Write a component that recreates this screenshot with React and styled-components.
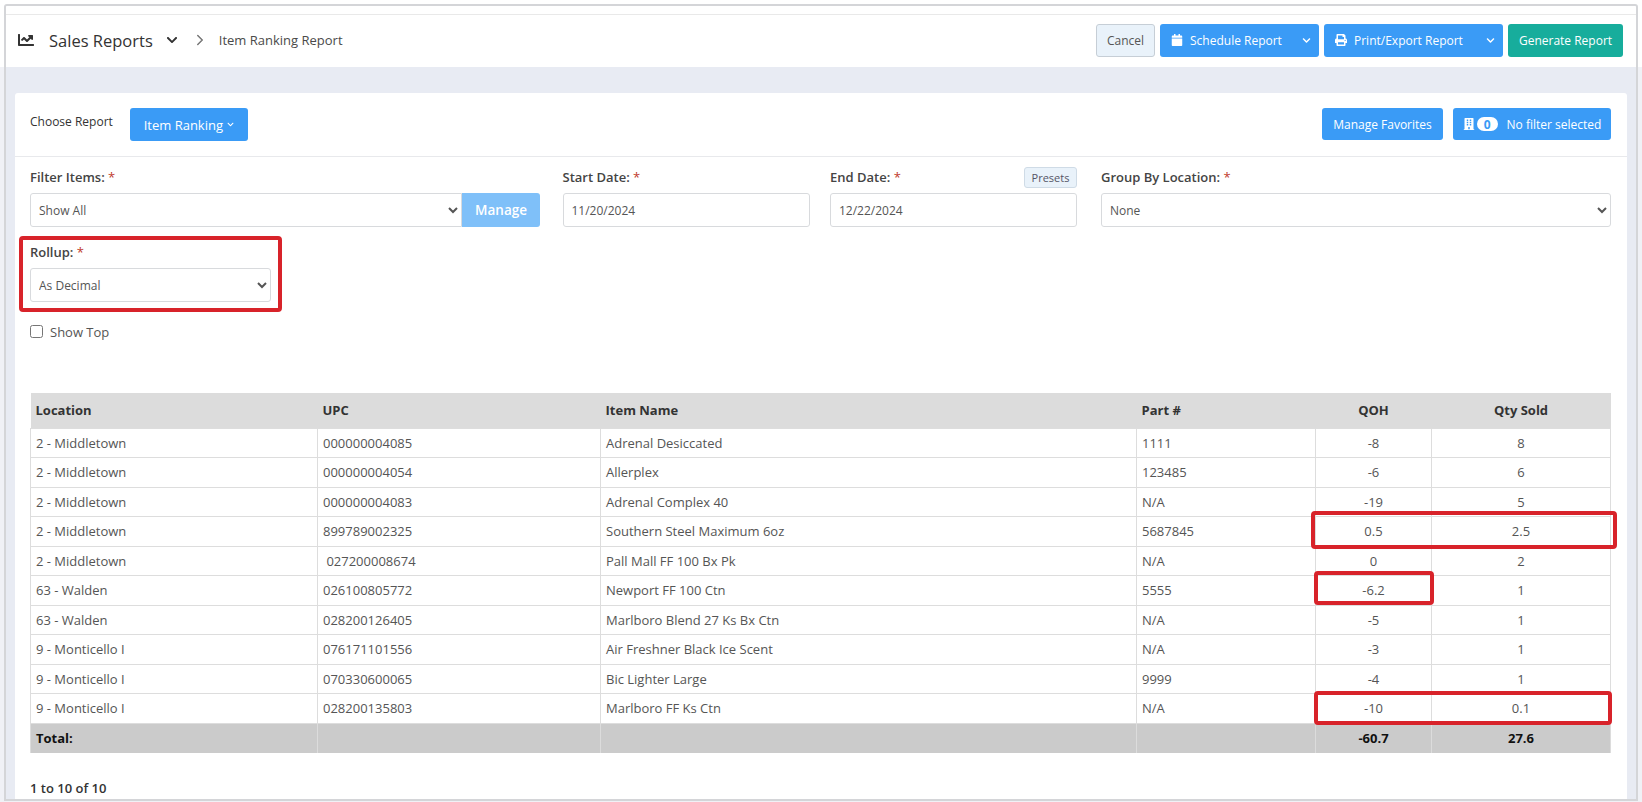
import React from "react";
import styled, { createGlobalStyle } from "styled-components";
import { FaChartLine, FaCalendar, FaPrint, FaBuilding, FaChevronDown } from "react-icons/fa";
import { ChevronRight } from "lucide-react";

const Global = createGlobalStyle`
  html, body { margin: 0; padding: 0; height: 802px; overflow: hidden; }
  body {
    font-family: "Open Sans", "Liberation Sans", sans-serif;
    font-size: 12px;
    color: #555;
    background: linear-gradient(#fff 67px, #f0f1f6 67px);
  }
  * { box-sizing: border-box; }
`;

const Frame = styled.div`
  margin: 4px 0 0 4px;
  width: 1634px;
  height: 797px;
  border: 2px solid #d4d5d8;
  border-radius: 3px 3px 0 0;
  display: flex;
  flex-direction: column;
  overflow: hidden;
  background: #e8ebf3;
`;
const TopStrip = styled.div`
  height: 9px;
  flex: none;
  background: #fff;
  border-bottom: 1px solid #e9e9e9;
`;
const TopBar = styled.header`
  height: 52px;
  flex: none;
  background: #fff;
  display: flex;
  align-items: center;
  justify-content: space-between;
  padding: 0 13px 2px 12px;
`;
const Crumbs = styled.div`
  display: flex;
  align-items: center;
  color: #333;
`;
const Title = styled.span`
  font-size: 16.5px;
  margin-left: 15px;
  color: #333;
`;
const Current = styled.span`
  font-size: 13px;
  color: #4a4a4a;
  margin-left: 10px;
`;
const Actions = styled.div`
  display: flex;
  gap: 5px;
`;
const Button = styled.button`
  height: ${p => p.$h || 32}px;
  border-radius: 3px;
  border: 1px solid ${p => p.$border || "transparent"};
  background: ${p => p.$bg || "#3a9bf6"};
  color: ${p => p.$color || "#fff"};
  font: ${p => p.$size || 12}px "Open Sans", sans-serif;
  display: flex;
  align-items: center;
  justify-content: ${p => p.$between ? "space-between" : "center"};
  width: ${p => p.$w}px;
  padding: 0 ${p => p.$between ? "7px" : "0"} 0 ${p => p.$between ? "10px" : "0"};
  white-space: nowrap;
  flex: none;
`;
const IconText = styled.span`
  display: flex;
  align-items: center;
  gap: 7px;
`;
const Main = styled.main`
  flex: 1;
  padding: 26px 9px 0 9px;
`;
const Card = styled.section`
  background: #fff;
  height: 706px;
  border-radius: 3px 3px 0 0;
`;
const CardHeader = styled.div`
  height: 64px;
  padding: 15px 16px 0 15px;
  display: flex;
  justify-content: space-between;
  align-items: flex-start;
  border-bottom: 1px solid #e8e9ec;
`;
const HeaderGroup = styled.div`
  display: flex;
  align-items: flex-start;
  gap: ${p => p.$gap}px;
`;
const ChooseLabel = styled.span`
  font-size: 12px;
  color: #333;
  line-height: 16px;
  margin-top: 6px;
`;
const Count = styled.span`
  background: #fff;
  color: #3a9bf6;
  font-size: 12px;
  font-weight: 700;
  width: 21px;
  height: 14px;
  border-radius: 7px;
  display: inline-flex;
  align-items: center;
  justify-content: center;
  margin-left: -5px;
  margin-right: 2px;
`;
const Filters = styled.div`
  padding: 11px 15px 0 15px;
`;
const FieldGrid = styled.div`
  display: grid;
  grid-template-columns: 532.5px 267.5px 271px 510px;
`;
const Field = styled.div`
  width: ${p => p.$w}px;
`;
const LabelRow = styled.div`
  height: 25px;
  display: flex;
  align-items: flex-start;
  justify-content: space-between;
`;
const Label = styled.label`
  font-size: 13px;
  font-weight: 600;
  color: #444;
  line-height: 18px;
`;
const Star = styled.span`
  color: #c0392b;
  font-weight: 400;
`;
const Presets = styled.span`
  font-size: 11px;
  color: #556;
  background: #e9f2fa;
  border: 1px solid #cfdbe6;
  border-radius: 3px;
  height: 21px;
  width: 53px;
  display: flex;
  align-items: center;
  justify-content: center;
  margin-top: -1px;
`;
const Select = styled.select`
  height: 34px;
  width: 100%;
  border: 1px solid #d8dadd;
  border-radius: ${p => p.$joined ? "3px 0 0 3px" : "3px"};
  background: #fff;
  color: #555;
  font: 12px "Open Sans", sans-serif;
  padding: 0 4px;
  outline: none;
  min-width: 0;
`;
const Input = styled.input`
  height: 34px;
  width: 100%;
  border: 1px solid #d8dadd;
  border-radius: 3px;
  color: #555;
  font: 12px "Open Sans", sans-serif;
  padding: 0 8px;
`;
const Joined = styled.div`
  display: flex;
`;
const ManageButton = styled.button`
  width: 78px;
  height: 34px;
  flex: none;
  border: 0;
  border-radius: 0 3px 3px 0;
  background: #7fc0f9;
  color: #fff;
  font: 600 13.5px "Open Sans", sans-serif;
`;
const Highlight = styled.div`
  width: 263px;
  height: 76px;
  margin: 9px 0 0 -11px;
  padding: 3px 7px 0 7px;
  border: 4px solid #d8232a;
  border-radius: 4px;
`;
const CheckRow = styled.label`
  display: flex;
  align-items: center;
  gap: 7px;
  margin-top: 12px;
  height: 15px;
  font-size: 13px;
  color: #555;
`;
const Check = styled.input`
  width: 13px;
  height: 13px;
  margin: 0;
`;
const TableWrap = styled.div`
  position: relative;
  margin-top: 54px;
  width: 1580px;
`;
const Table = styled.table`
  width: 100%;
  table-layout: fixed;
  border-collapse: collapse;
  font-size: 13px;
`;
const Th = styled.th`
  height: 35px;
  background: #dcdcdc;
  color: #333;
  font-weight: 700;
  font-size: 13px;
  padding: 0 5px;
  text-align: ${p => p.$center ? "center" : "left"};
`;
const Td = styled.td`
  height: 29.5px;
  border: 1px solid #dddddd;
  color: #555;
  padding: 0 5px;
  text-align: ${p => p.$center ? "center" : "left"};
`;
const TotalCell = styled.td`
  height: 30px;
  background: #cbcbcb;
  border: 1px solid #dcdcdc;
  border-bottom: 0;
  color: #111;
  font-weight: 700;
  padding: 0 5px;
  text-align: ${p => p.$center ? "center" : "left"};
`;
const Mark = styled.div`
  position: absolute;
  border: 4px solid #d8232a;
  border-radius: 4px;
`;
const Pager = styled.div`
  margin-top: 26px;
  font-size: 13px;
  font-weight: 600;
  color: #333;
`;

const rows = [
  ["2 - Middletown", "000000004085", "Adrenal Desiccated", "1111", "-8", "8"],
  ["2 - Middletown", "000000004054", "Allerplex", "123485", "-6", "6"],
  ["2 - Middletown", "000000004083", "Adrenal Complex 40", "N/A", "-19", "5"],
  ["2 - Middletown", "899789002325", "Southern Steel Maximum 6oz", "5687845", "0.5", "2.5"],
  ["2 - Middletown", "\u00a0027200008674", "Pall Mall FF 100 Bx Pk", "N/A", "0", "2"],
  ["63 - Walden", "026100805772", "Newport FF 100 Ctn", "5555", "-6.2", "1"],
  ["63 - Walden", "028200126405", "Marlboro Blend 27 Ks Bx Ctn", "N/A", "-5", "1"],
  ["9 - Monticello I", "076171101556", "Air Freshner Black Ice Scent", "N/A", "-3", "1"],
  ["9 - Monticello I", "070330600065", "Bic Lighter Large", "9999", "-4", "1"],
  ["9 - Monticello I", "028200135803", "Marlboro FF Ks Ctn", "N/A", "-10", "0.1"],
];
const widths = [287, 283, 536, 179, 116, 179];
const marks = [
  { left: 1281, top: 118, width: 306, height: 38 },
  { left: 1284, top: 178, width: 120, height: 34 },
  { left: 1284, top: 298, width: 298, height: 34 },
];

export default function App() {
  return (
    <>
      <Global />
      <Frame>
        <TopStrip />
        <TopBar>
          <Crumbs>
            <FaChartLine size={16} color="#333" />
            <Title>Sales Reports</Title>
            <FaChevronDown size={12} color="#333" style={{ marginLeft: 13 }} />
            <ChevronRight size={18} color="#777" style={{ marginLeft: 13 }} />
            <Current>Item Ranking Report</Current>
          </Crumbs>
          <Actions>
            <Button $w={59} $h={33} $bg="#e9f2fa" $border="#c6ced6" $color="#555">Cancel</Button>
            <Button $w={159} $h={33} $between>
              <IconText><FaCalendar size={12} />Schedule Report</IconText>
              <FaChevronDown size={9} />
            </Button>
            <Button $w={179} $h={33} $between>
              <IconText><FaPrint size={12} />Print/Export Report</IconText>
              <FaChevronDown size={9} />
            </Button>
            <Button $w={115} $h={33} $bg="#17ad9c">Generate Report</Button>
          </Actions>
        </TopBar>
        <Main>
          <Card>
            <CardHeader>
              <HeaderGroup $gap={17}>
                <ChooseLabel>Choose Report</ChooseLabel>
                <Button $w={118} $h={33} $size={13}>
                  <IconText>Item Ranking<FaChevronDown size={7} style={{ marginLeft: -3 }} /></IconText>
                </Button>
              </HeaderGroup>
              <HeaderGroup $gap={10}>
                <Button $w={121}>Manage Favorites</Button>
                <Button $w={158}>
                  <IconText><FaBuilding size={12} /><Count>0</Count>No filter selected</IconText>
                </Button>
              </HeaderGroup>
            </CardHeader>
            <Filters>
              <FieldGrid>
                <Field $w={510}>
                  <LabelRow><Label>Filter Items: <Star>*</Star></Label></LabelRow>
                  <Joined>
                    <Select $joined defaultValue="all"><option value="all">Show All</option></Select>
                    <ManageButton>Manage</ManageButton>
                  </Joined>
                </Field>
                <Field $w={247}>
                  <LabelRow><Label>Start Date: <Star>*</Star></Label></LabelRow>
                  <Input defaultValue="11/20/2024" />
                </Field>
                <Field $w={247}>
                  <LabelRow><Label>End Date: <Star>*</Star></Label><Presets>Presets</Presets></LabelRow>
                  <Input defaultValue="12/22/2024" />
                </Field>
                <Field $w={510}>
                  <LabelRow><Label>Group By Location: <Star>*</Star></Label></LabelRow>
                  <Select defaultValue="none"><option value="none">None</option></Select>
                </Field>
              </FieldGrid>
              <Highlight>
                <LabelRow><Label>Rollup: <Star>*</Star></Label></LabelRow>
                <Select defaultValue="d"><option value="d">As Decimal</option></Select>
              </Highlight>
              <CheckRow><Check type="checkbox" />Show Top</CheckRow>
              <TableWrap>
                <Table>
                  <colgroup>
                    {widths.map((w, i) => <col key={i} style={{ width: w }} />)}
                  </colgroup>
                  <thead>
                    <tr>
                      <Th>Location</Th>
                      <Th>UPC</Th>
                      <Th>Item Name</Th>
                      <Th>Part #</Th>
                      <Th $center>QOH</Th>
                      <Th $center>Qty Sold</Th>
                    </tr>
                  </thead>
                  <tbody>
                    {rows.map((r, i) => (
                      <tr key={i}>
                        {r.map((c, j) => <Td key={j} $center={j > 3}>{c}</Td>)}
                      </tr>
                    ))}
                    <tr>
                      <TotalCell>Total:</TotalCell>
                      <TotalCell />
                      <TotalCell />
                      <TotalCell />
                      <TotalCell $center>-60.7</TotalCell>
                      <TotalCell $center>27.6</TotalCell>
                    </tr>
                  </tbody>
                </Table>
                {marks.map((m, i) => <Mark key={i} style={m} />)}
              </TableWrap>
              <Pager>1 to 10 of 10</Pager>
            </Filters>
          </Card>
        </Main>
      </Frame>
    </>
  );
}
